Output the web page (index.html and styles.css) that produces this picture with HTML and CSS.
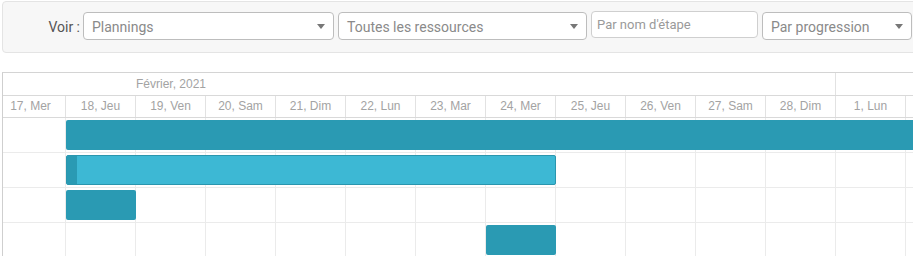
FILE: index.html
```html
<!DOCTYPE html>
<html lang="fr">
<head>
<meta charset="utf-8">
<title>Plannings</title>
<link rel="stylesheet" href="styles.css">
</head>
<body>
<div class="toolbar">
  <label class="voir">Voir :</label>
  <div class="select s1"><span class="val">Plannings</span><i class="caret"></i></div>
  <div class="select s2"><span class="val">Toutes les ressources</span><i class="caret"></i></div>
  <div class="input"><span class="ph">Par nom d'étape</span></div>
  <div class="select s4"><span class="val">Par progression</span><i class="caret"></i></div>
</div>

<div class="gantt">
  <div class="track">
    <div class="months">
      <div class="month feb"><span>Février, 2021</span></div>
      <div class="month mar"></div>
    </div>
    <div class="days">
      <div class="day">17, Mer</div>
      <div class="day">18, Jeu</div>
      <div class="day">19, Ven</div>
      <div class="day">20, Sam</div>
      <div class="day">21, Dim</div>
      <div class="day">22, Lun</div>
      <div class="day">23, Mar</div>
      <div class="day">24, Mer</div>
      <div class="day">25, Jeu</div>
      <div class="day">26, Ven</div>
      <div class="day">27, Sam</div>
      <div class="day">28, Dim</div>
      <div class="day">1, Lun</div>
      <div class="day"></div>
    </div>
    <div class="row"><div class="bar" style="grid-column: 2 / span 13"></div></div>
    <div class="row"><div class="bar light" style="grid-column: 2 / span 7"><div class="progress"></div></div></div>
    <div class="row"><div class="bar" style="grid-column: 2 / span 1"></div></div>
    <div class="row"><div class="bar" style="grid-column: 8 / span 1"></div></div>
  </div>
</div>
</body>
</html>
```

FILE: styles.css
```css
html, body {
  margin: 0;
  padding: 0;
  background: #fff;
  overflow: hidden;
}

body {
  width: 913px;
  height: 256px;
  font-family: Roboto, "Liberation Sans", Arial, sans-serif;
}

.toolbar {
  display: flex;
  align-items: flex-start;
  gap: 4px;
  margin: 1px -10px 0 2px;
  padding-top: 10px;
  box-sizing: border-box;
  height: 52px;
  background: #f7f7f7;
  border: 1px solid #e4e4e4;
  border-radius: 4px;
}

.voir {
  width: 77px;
  margin-right: -1px;
  padding-top: 1px;
  text-align: right;
  font-size: 14px;
  line-height: 28px;
  color: #555;
}

.select, .input {
  display: flex;
  align-items: center;
  box-sizing: border-box;
  height: 28px;
  background: #fff;
  border: 1px solid #bdbdbd;
  border-radius: 4px;
  padding: 0 0 0 8px;
  font-size: 14px;
  color: #8a8a8a;
  white-space: nowrap;
}

.s1 { width: 251px; }
.s2 { width: 249px; }
.s4 { width: 150px; padding-left: 8px; }

.input {
  width: 167px;
  height: 27px;
  margin-top: -1px;
  padding-left: 5px;
  border-color: #cfcfcf;
  font-size: 13px;
  color: #9a9a9a;
}

.val { flex: 1; line-height: 26px; padding-top: 2px; }
.ph { line-height: 24px; padding-top: 1px; }

.caret {
  width: 0;
  height: 0;
  margin: 1px 8px 0 4px;
  border-left: 4px solid transparent;
  border-right: 4px solid transparent;
  border-top: 5px solid #777;
}

.gantt {
  margin: 19px 0 0 2px;
  width: 930px;
  border-top: 1px solid #d4d4d4;
  border-left: 1px solid #cfcfcf;
  overflow: hidden;
  font-family: "Liberation Sans", Arial, sans-serif;
  font-size: 12px;
  color: #a3a3a3;
}

.track {
  margin-left: -7px;
  width: 980px;
}

.months {
  display: flex;
  height: 22px;
  border-bottom: 1px solid #d9d9d9;
}

.month {
  line-height: 22px;
  box-sizing: border-box;
}

.feb {
  width: 840px;
  border-right: 1px solid #e2e2e2;
  padding-left: 140px;
}

.mar { flex: 1; }

.days {
  display: grid;
  grid-template-columns: repeat(14, 70px);
  height: 21px;
  border-bottom: 1px solid #d9d9d9;
}

.day {
  text-align: center;
  line-height: 21px;
  border-right: 1px solid #e2e2e2;
}

.row {
  display: grid;
  grid-template-columns: repeat(14, 70px);
  height: 34px;
  border-bottom: 1px solid #ebebeb;
  background-image: linear-gradient(to right, transparent 69px, #ebebeb 69px, #ebebeb 70px);
  background-size: 70px 100%;
  background-position: 0 0;
}

.bar {
  grid-row: 1;
  margin: 2px 0 2px 0;
  height: 30px;
  box-sizing: border-box;
  background: #2a9ab3;
  border-radius: 2px;
  position: relative;
  z-index: 1;
}

.bar.light {
  background: #3db8d4;
  border: 1px solid #2a96ae;
  overflow: hidden;
}

.progress {
  width: 10px;
  height: 100%;
  background: #2a9ab3;
}
```
